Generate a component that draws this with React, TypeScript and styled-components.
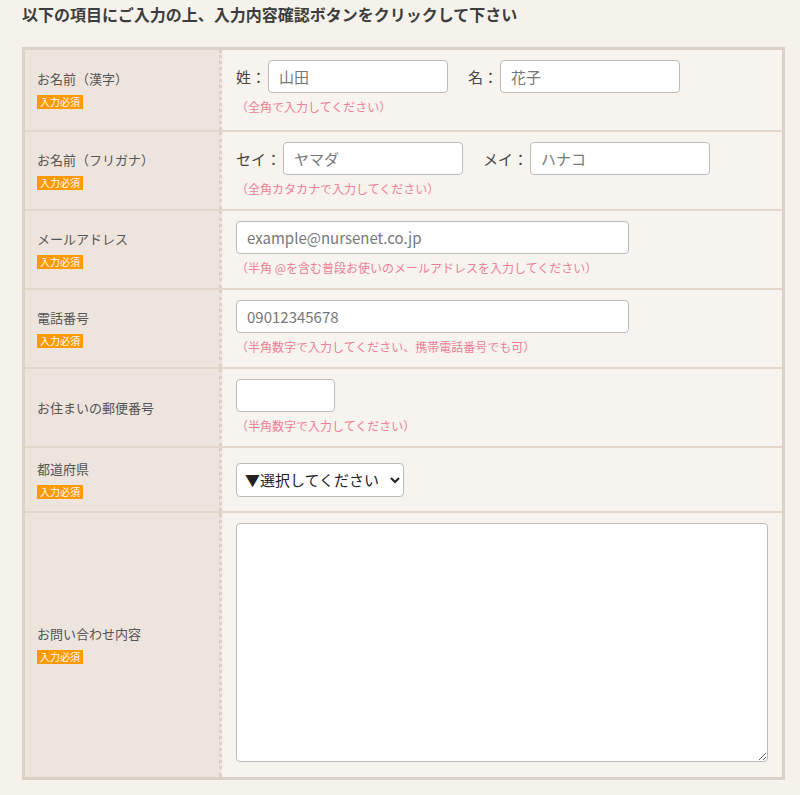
import styled, { createGlobalStyle } from 'styled-components';

const Global = createGlobalStyle`
  body {
    margin: 0;
    background: #f5f2ec;
    font-family: "Noto Sans CJK JP", "Liberation Sans", sans-serif;
    color: #444;
  }
`;

const Page = styled.div`
  padding: 3px 15px 16px 22px;
`;

const Heading = styled.h2`
  margin: 0 0 22px;
  font-size: 16px;
  font-weight: bold;
  color: #3d3d3d;
  line-height: 22px;
`;

const Table = styled.div`
  border: 3px solid #dcd1c6;
  background: #f7f4ef;
`;

const Row = styled.div<{ $h: number }>`
  display: grid;
  grid-template-columns: 197px 1fr;
  height: ${p => p.$h}px;
  box-sizing: border-box;
  & + & { border-top: 2px solid #e3d7cc; }
`;

const Label = styled.div`
  background: #ece4dd;
  border-right: 3px dotted #dcd0c4;
  padding: 0 12px;
  display: flex;
  flex-direction: column;
  justify-content: center;
  gap: 8px;
  font-size: 13px;
  line-height: 16px;
  color: #555;
`;

const Badge = styled.span`
  align-self: flex-start;
  background: #ff9900;
  color: #fff;
  font-size: 10px;
  line-height: 14px;
  padding: 0 3px;
`;

const Cell = styled.div<{ $center?: boolean }>`
  padding: 10px 14px;
  display: flex;
  flex-direction: column;
  justify-content: ${p => (p.$center ? 'center' : 'flex-start')};
  gap: 6px;
  line-height: 16px;
`;

const Line = styled.div`
  display: flex;
  align-items: center;
  gap: 20px;
`;

const Pair = styled.label`
  display: flex;
  align-items: center;
  gap: 2px;
  font-size: 15px;
  color: #444;
`;

const Input = styled.input<{ $w: number }>`
  box-sizing: border-box;
  width: ${p => p.$w}px;
  height: 33px;
  border: 1px solid #bbb;
  border-radius: 4px;
  background: #fff;
  padding: 0 10px;
  font-size: 15px;
  font-family: inherit;
  color: #444;
  &::placeholder { color: #777; }
`;

const Hint = styled.div`
  font-size: 12px;
  color: #ee7f98;
`;

const Select = styled.select`
  box-sizing: border-box;
  width: 168px;
  height: 34px;
  border: 1px solid #bbb;
  border-radius: 4px;
  background: #fff;
  font-size: 15px;
  font-family: inherit;
  color: #222;
  padding: 0 4px;
`;

const Area = styled.textarea`
  box-sizing: border-box;
  width: 532px;
  height: 239px;
  border: 1px solid #bbb;
  border-radius: 4px;
  background: #fff;
`;

const Req = () => <Badge>入力必須</Badge>;

export default function App() {
  return (
    <Page>
      <Global />
      <Heading>以下の項目にご入力の上、入力内容確認ボタンをクリックして下さい</Heading>
      <Table>
        <Row $h={80}>
          <Label>お名前（漢字）<Req /></Label>
          <Cell>
            <Line>
              <Pair>姓：<Input $w={180} placeholder="山田" /></Pair>
              <Pair>名：<Input $w={180} placeholder="花子" /></Pair>
            </Line>
            <Hint>（全角で入力してください）</Hint>
          </Cell>
        </Row>
        <Row $h={79}>
          <Label>お名前（フリガナ）<Req /></Label>
          <Cell>
            <Line>
              <Pair>セイ：<Input $w={180} placeholder="ヤマダ" /></Pair>
              <Pair>メイ：<Input $w={180} placeholder="ハナコ" /></Pair>
            </Line>
            <Hint>（全角カタカナで入力してください）</Hint>
          </Cell>
        </Row>
        <Row $h={79}>
          <Label>メールアドレス<Req /></Label>
          <Cell>
            <Input $w={393} placeholder="example@nursenet.co.jp" />
            <Hint>（半角 @を含む普段お使いのメールアドレスを入力してください）</Hint>
          </Cell>
        </Row>
        <Row $h={79}>
          <Label>電話番号<Req /></Label>
          <Cell>
            <Input $w={393} placeholder="09012345678" />
            <Hint>（半角数字で入力してください、携帯電話番号でも可）</Hint>
          </Cell>
        </Row>
        <Row $h={79}>
          <Label>お住まいの郵便番号</Label>
          <Cell>
            <Input $w={99} />
            <Hint>（半角数字で入力してください）</Hint>
          </Cell>
        </Row>
        <Row $h={65}>
          <Label>都道府県<Req /></Label>
          <Cell $center>
            <Select defaultValue="">
              <option value="">▼選択してください</option>
            </Select>
          </Cell>
        </Row>
        <Row $h={266}>
          <Label>お問い合わせ内容<Req /></Label>
          <Cell>
            <Area />
          </Cell>
        </Row>
      </Table>
    </Page>
  );
}
